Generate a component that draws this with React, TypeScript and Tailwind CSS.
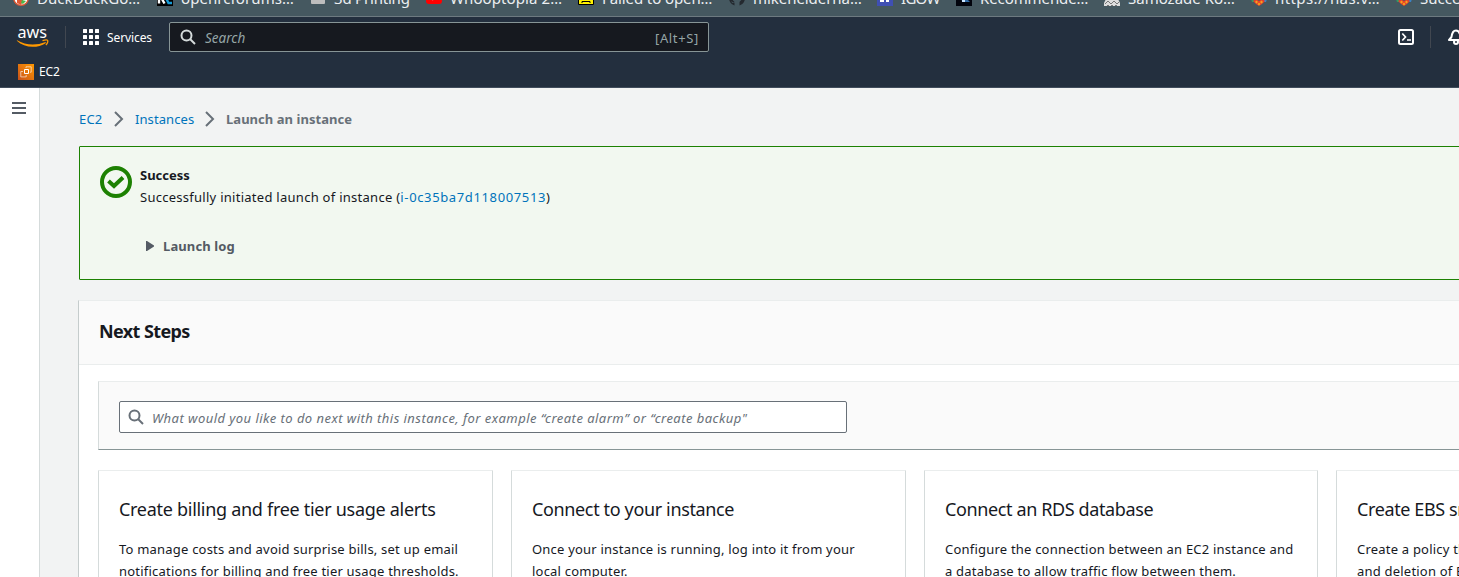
import React from "react";

type Mark = { text: string; w: string; ls: string; icon: React.ReactNode };

const Svg = ({ children }: { children: React.ReactNode }) => (
  <svg width="16" height="16" viewBox="0 0 16 16" className="shrink-0">{children}</svg>
);

const Gem = () => (
  <Svg>
    <path d="M0 9h3v3H1z" fill="#2f9e64" />
    <path d="M13 9h3l-1 3h-2z" fill="#3b82c4" />
    <path d="M2 11l3-2 3 2 3-2 3 2-3 3-3 2-3-2z" fill="#e5422b" />
    <path d="M4 12l1.500-1.500L7 12l-1.500 1.500zM9 12l1.500-1.500L12 12l-1.500 1.500zM6.500 14L8 12.500 9.500 14 8 15.500z" fill="#f6a21c" />
  </Svg>
);

const marks: Mark[] = [
  { text: "DuckDuckGo…", w: "w-[144px]", ls: "tracking-[0.05px]", icon: <Svg><circle cx="8" cy="8" r="7.300" fill="#fff" stroke="#de5833" strokeWidth="1.400" /><path d="M4 3h5l1 8-2 4-4-2z" fill="#de5833" /><path d="M9 10l4 1-3 3-2-1z" fill="#4cb648" /></Svg> },
  { text: "openrcforums…", w: "w-[153px]", ls: "tracking-[0.08px]", icon: <Svg><path d="M0 0h16v16H0z" fill="#000" /><path d="M2 13.500V4h4l1 3-2 2 2.500 4.500" fill="none" stroke="#fff" strokeWidth="2.400" /><path d="M15 6h-3l-2 4 1.500 3H15" fill="none" stroke="#169bd7" strokeWidth="2.400" /></Svg> },
  { text: "3d Printing", w: "w-[116px]", ls: "tracking-[-0.2px]", icon: <Svg><rect x="1" y="2" width="14" height="12" rx="1" fill="#bdbdbd" /></Svg> },
  { text: "Whooptopia 2…", w: "w-[152px]", ls: "tracking-[0.1px]", icon: <Svg><rect y="2" width="16" height="12" rx="3" fill="#f00" /><path d="M6.500 5.500l4.500 2.500-4.500 2.500z" fill="#fff" /></Svg> },
  { text: "Failed to open…", w: "w-[151px]", ls: "tracking-[-0.1px]", icon: <Svg><path d="M.5.500h15v14H.5z" fill="#fff100" stroke="#000" /><path d="M4 13v-1.500h8V13" fill="none" stroke="#000" /></Svg> },
  { text: "mikeheiderna…", w: "w-[148px]", ls: "tracking-[-0.05px]", icon: <Svg><path d="M8 0a8 8 0 0 0-2.500 15.600V13C3 13.500 3 12 2 11.500c1.500-.5 2 1.500 3.500 1C5.500 11 3 11 3 7V4l3 1h4l3-1v3c0 4-2.500 4-2.500 5.500v3.100A8 8 0 0 0 8 0z" fill="#24292f" /></Svg> },
  { text: "IGOW", w: "w-[79px]", ls: "tracking-[-0.7px]", icon: <Svg><path d="M0 0h16v16H0z" fill="#3f4fb3" /><path d="M3 8h4v4H3zM9 5h3v7H9z" fill="#fff" /></Svg> },
  { text: "Recommende…", w: "w-[148px]", ls: "tracking-[-0.1px]", icon: <Svg><path d="M0 0h16v16H0z" fill="#02040d" /><path d="M4 9h7l3 3H8z" fill="#316ca8" /><path d="M6 9h3v3H6z" fill="#cce6ff" /></Svg> },
  { text: "Samozade Ro…", w: "w-[147px]", ls: "tracking-[0px]", icon: <Svg><path d="M3 7h10l3 6v3H0v-3z" fill="#ddd" /><path d="M1 14l3-3 3 3 3-3 3 3 2-2M3 15.500h2M7 15.500h2M11 15.500h2" fill="none" stroke="#777" /></Svg> },
  { text: "https://nas.v…", w: "w-[145px]", ls: "tracking-[0.4px]", icon: <Gem /> },
  { text: "Success", w: "w-[145px]", ls: "tracking-[0px]", icon: <Gem /> },
];

const Magnifier = ({ className }: { className: string }) => (
  <svg width="16" height="16" viewBox="0 0 16 16" fill="none" stroke="currentColor" strokeWidth="2" className={className}>
    <circle cx="6.500" cy="6.500" r="5" />
    <path d="M10 10l5 5" />
  </svg>
);

const Chevron = () => (
  <svg width="16" height="16" viewBox="0 0 16 16" fill="none" stroke="#687078" strokeWidth="2" className="shrink-0">
    <path d="M4 1l7 7-7 7" />
  </svg>
);

const cards = [
  { title: "Create billing and free tier usage alerts", w: "w-[395px]", tt: "tracking-[-0.29px]", a: "To manage costs and avoid surprise bills, set up email", b: "notifications for billing and free tier usage thresholds." },
  { title: "Connect to your instance", w: "w-[395px]", tt: "tracking-[-0.36px]", a: "Once your instance is running, log into it from your", b: "local computer." },
  { title: "Connect an RDS database", w: "w-[394px]", tt: "tracking-[-0.38px]", a: "Configure the connection between an EC2 instance and", b: "a database to allow traffic flow between them." },
  { title: "Create EBS snapshot policy", w: "w-[395px]", tt: "tracking-[-0.38px]", a: "Create a policy that automates the creation, retention,", b: "and deletion of EBS snapshots" },
];

export default function App() {
  return (
    <div className="flex h-[577px] w-[1459px] flex-col overflow-hidden bg-[#f2f3f3] font-['Noto_Sans',sans-serif] text-[13px] leading-[22px] text-[#16191f]">
      <div className="flex h-[17px] shrink-0 items-end overflow-hidden border-b border-[#6d7a80] bg-[#455860] pl-[13px]">
        {marks.map((m) => (
          <div key={m.text} className={`flex shrink-0 items-center gap-2 pb-[7px] text-[15px] leading-[22px] text-[#eceff1] ${m.w}`}>
            {m.icon}
            <span className={`whitespace-nowrap ${m.ls}`}>{m.text}</span>
          </div>
        ))}
      </div>

      <header className="h-[71px] shrink-0 border-b border-[#414d5c] bg-[#232f3e] text-white">
        <div className="flex h-10 items-center">
          <svg width="33" height="22" viewBox="0 0 33 22" className="ml-4 shrink-0">
            <text x="1.500" y="12" fontSize="16" fill="#fff" textLength="29.500" lengthAdjust="spacingAndGlyphs">aws</text>
            <path d="M1 14.300c8.500 5.200 19.500 5.400 28.500 1.700l.4.900C21 22.700 8.500 22 .8 14.700z" fill="#f90" />
            <path d="M26.500 14.700c3-1 4.800-.8 5.200-.2s-.2 3-1.800 4.500" fill="none" stroke="#f90" strokeWidth="1.300" />
          </svg>
          <div className="ml-4 h-[22px] w-px shrink-0 bg-[#414750]" />
          <svg width="16" height="16" viewBox="0 0 16 16" fill="#fff" className="ml-[17px] shrink-0">
            {[0, 6, 12].map((y) => [0, 6, 12].map((x) => <rect key={`${x}-${y}`} x={x} y={y} width="4" height="4" rx=".5" />))}
          </svg>
          <span className="ml-2 w-[62px] shrink-0 pt-px text-[12px] tracking-[-0.1px]">Services</span>
          <div className="flex h-[30px] w-[540px] shrink-0 items-center rounded-[2px] border border-[#879596] bg-[#16191f] pr-[9px] pl-[10px] text-[#95a5a6]">
            <Magnifier className="text-[#d5dbdb]" />
            <span className="ml-[9px] pt-[2px] text-[13.500px] italic">Search</span>
            <span className="ml-auto pt-px tracking-[0.65px]">[Alt+S]</span>
          </div>
          <svg width="16" height="16" viewBox="0 0 16 16" fill="none" stroke="#fff" strokeWidth="2" className="ml-[689px] shrink-0">
            <rect x="1" y="1" width="14" height="14" rx="1.500" />
            <path d="M4.300 4.500L7.500 8l-3.200 3.500M9 11h4" strokeWidth="1.700" />
          </svg>
          <div className="ml-4 h-[22px] w-px shrink-0 bg-[#414750]" />
          <svg width="16" height="16" viewBox="0 0 16 16" fill="none" stroke="#fff" strokeWidth="2" className="ml-[17px] shrink-0">
            <path d="M1 11h14l-2.500-3C12 4 11 1.500 8 1.500S4 4 3.500 8z" strokeLinejoin="round" />
            <circle cx="8" cy="13" r="2" />
          </svg>
        </div>
        <div className="flex h-[30px] items-center pl-[18px] text-[12px] tracking-[-0.1px]">
          <svg width="16" height="16" viewBox="0 0 16 16" className="mr-[5px]">
            <defs><linearGradient id="o" x1="0" y1="1" x2="1" y2="0"><stop stopColor="#c8511b" /><stop offset="1" stopColor="#f90" /></linearGradient></defs>
            <path d="M0 0h16v16H0z" fill="url(#o)" />
            <path d="M6.500 5.500h4v4h-4z" fill="none" stroke="#fff" strokeWidth="1" />
            <path d="M8 4V2.800h5.200v5.400H12M5 7.500H2.800v5.400h5.400V11" fill="none" stroke="#fff" strokeOpacity=".75" strokeWidth=".8" />
          </svg>
          EC2
        </div>
      </header>

      <div className="flex min-h-0 flex-1">
        <aside className="w-10 shrink-0 border-r border-[#d5dbdb] bg-white pt-[14px] pl-3">
          <svg width="14" height="12" viewBox="0 0 14 12" fill="#545b64"><path d="M0 0h14v2H0zM0 5h14v2H0zM0 10h14v2H0z" /></svg>
        </aside>
        <main className="w-[1720px] shrink-0 pt-5 pl-[38px]">
          <nav className="ml-px flex h-[22px] items-center">
            <a className="w-8 tracking-[0.2px] text-[#0073bb]">EC2</a>
            <Chevron />
            <a className="ml-2 w-[67px] tracking-[0.08px] text-[#0073bb]">Instances</a>
            <Chevron />
            <span className="ml-2 font-bold tracking-[0.04px] text-[#687078]">Launch an instance</span>
          </nav>

          <section className="mt-4 ml-px flex h-[134px] rounded-[1px] border border-[#1d8102] bg-[#f2f8f0] pt-[17px] pl-5">
            <svg width="32" height="32" viewBox="0 0 32 32" fill="none" stroke="#1d8102" strokeWidth="4" className="mt-0.5 shrink-0">
              <circle cx="16" cy="16" r="14" />
              <path d="M8.500 15l5.500 5 9-8.500" />
            </svg>
            <div className="ml-2">
              <div className="font-bold">Success</div>
              <div className="tracking-[0.27px]">Successfully initiated launch of instance (<a className="tracking-[0.63px] text-[#0073bb]">i-0c35ba7d118007513</a>)</div>
              <div className="mt-[27px] flex items-center pl-[6px] font-bold tracking-[0.12px] text-[#545b64]">
                <svg width="8" height="10" viewBox="0 0 8 10" className="mr-[9px]"><path d="M0 0h1l7 4.500v1L1 10H0z" fill="#545b64" /></svg>
                Launch log
              </div>
            </div>
          </section>

          <section className="mt-5 border-t border-l border-t-[#eaeded] border-l-[#c5cccc] bg-white">
            <h2 className="flex h-16 items-center border-b border-[#eaeded] bg-[#fafafa] pb-[3px] pl-5 text-[18px] font-bold tracking-[-0.6px]">Next Steps</h2>
            <div className="pt-4 pl-[19px]">
              <div className="h-[69px] border-t border-b border-l border-t-[#eaeded] border-b-[#879596] border-l-[#d5dbdb] bg-[#fafafa] pt-[19px] pl-5">
                <div className="flex h-8 w-[728px] items-center rounded-[2px] border border-[#687078] bg-white pl-2 text-[#687078]">
                  <Magnifier className="mr-2" />
                  <span className="pt-[2px] tracking-[0.46px] italic">What would you like to do next with this instance, for example “create alarm” or “create backup"</span>
                </div>
              </div>
              <div className="mt-5 flex gap-[18px]">
                {cards.map((c) => (
                  <article key={c.title} className={`h-[180px] shrink-0 rounded-t-[1px] border border-[#d5dbdb] border-t-[#eaeded] pt-[27px] pl-5 ${c.w}`}>
                    <h3 className={`text-[18px] leading-[22px] whitespace-nowrap ${c.tt}`}>{c.title}</h3>
                    <p className="mt-[18px] tracking-[0.21px] whitespace-nowrap">{c.a}<br />{c.b}</p>
                  </article>
                ))}
              </div>
            </div>
          </section>
        </main>
      </div>
    </div>
  );
}
